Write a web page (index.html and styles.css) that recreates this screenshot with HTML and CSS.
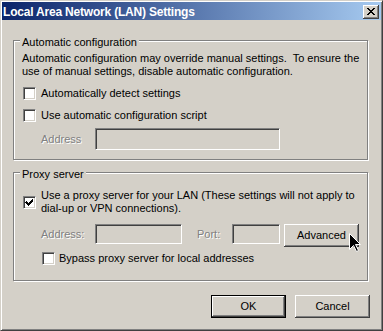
FILE: index.html
```html
<!DOCTYPE html>
<html>
<head>
<meta charset="utf-8">
<link rel="stylesheet" href="styles.css">
</head>
<body>
<div class="window">
  <div class="titlebar">
    <span class="title">Local Area Network (LAN) Settings</span>
    <span class="close">
      <svg width="16" height="14" viewBox="0 0 16 14" shape-rendering="crispEdges"><path fill="#000" d="M4 3h2v1h-2z M10 3h2v1h-2z M5 4h2v1h-2z M9 4h2v1h-2z M6 5h4v1h-4z M7 6h2v1h-2z M6 7h4v1h-4z M5 8h2v1h-2z M9 8h2v1h-2z M4 9h2v1h-2z M10 9h2v1h-2z"/></svg>
    </span>
  </div>
  <div class="client">
    <div class="group g1">
      <div class="legend">Automatic configuration</div>
      <p class="desc">Automatic configuration may override manual settings.&nbsp; To ensure the<br>use of manual settings, disable automatic configuration.</p>
      <div class="check"><span class="box"></span><span class="lbl">Automatically detect settings</span></div>
      <div class="check"><span class="box"></span><span class="lbl">Use automatic configuration script</span></div>
      <div class="field f1">
        <span class="dis addr">Address</span>
        <span class="edit e-auto"></span>
      </div>
    </div>
    <div class="group g2">
      <div class="legend">Proxy server</div>
      <div class="check multi"><span class="box"><svg width="13" height="13" viewBox="0 0 13 13" shape-rendering="crispEdges"><path fill="#000" d="M3 5h1v1h1v1h1v-1h1v-1h1v-1h1v-1h1v3h-1v1h-1v1h-1v1h-1v1h-1v-1h-1v-1h-1v-1h-1z"/></svg></span><span class="lbl">Use a proxy server for your LAN (These settings will not apply to<br>dial-up or VPN connections).</span></div>
      <div class="field f2">
        <span class="dis addr">Address:</span>
        <span class="edit e-addr"></span>
        <span class="dis port">Port:</span>
        <span class="edit e-port"></span>
        <button class="btn adv">Advanced</button>
      </div>
      <div class="check bypass"><span class="box"></span><span class="lbl">Bypass proxy server for local addresses</span></div>
    </div>
    <div class="actions">
      <button class="btn default">OK</button>
      <button class="btn">Cancel</button>
    </div>
  </div>
  <svg class="cursor" width="13" height="20" viewBox="0 0 13 20"><path d="M0.5 0.5V16.5L4.5 12.5L7.5 18.5L9.5 17.5L6.5 11.5H11.5Z" fill="#000" stroke="#fff" stroke-width="1"/></svg>
</div>
</body>
</html>
```
FILE: styles.css
```css
html, body {
  margin: 0;
  background: #d4d0c8;
}
body {
  font-family: "Liberation Sans", Arial, sans-serif;
  font-size: 11px;
  line-height: 13px;
  color: #000;
}
.window {
  position: relative;
  width: 383px;
  height: 331px;
  box-sizing: border-box;
  border: 1px solid;
  border-color: #d4d0c8 #404040 #404040 #d4d0c8;
  padding: 1px;
  box-shadow: inset 1px 1px 0 #fff, inset -1px -1px 0 #808080;
  background: #d4d0c8;
  overflow: hidden;
}
.titlebar {
  height: 18px;
  display: flex;
  align-items: flex-start;
  background: linear-gradient(90deg, #0a246a, #a6caf0);
  color: #fff;
}
.title {
  font-weight: bold;
  font-size: 12px;
  letter-spacing: -0.2px;
  line-height: 18px;
  padding-left: 1px;
  padding-top: 1px;
  white-space: nowrap;
}
.close {
  margin-left: auto;
  margin-right: 2px;
  margin-top: 3px;
  width: 16px;
  height: 14px;
  box-sizing: border-box;
  background: #d4d0c8;
  box-shadow: inset -1px -1px 0 #404040, inset 1px 1px 0 #fff, inset -2px -2px 0 #808080;
}
.close svg { display: block; }
.group {
  box-sizing: border-box;
  width: 355px;
  margin-left: 11px;
  border: 1px solid #808080;
  box-shadow: 1px 1px 0 #fff, inset 1px 1px 0 #fff;
  padding-left: 8px;
}
.g1 { margin-top: 20px; height: 120px; }
.g2 { margin-top: 12px; height: 109px; }
.legend {
  display: table;
  margin: -5px 0 0 -2px;
  padding: 0 2px;
  background: #d4d0c8;
}
.desc { margin: 3px 0 0; white-space: nowrap; }
.check {
  display: flex;
  align-items: center;
  margin-top: 9px;
  white-space: nowrap;
}
.g1 .desc + .check { margin-top: 9px; }
.check.multi { margin-top: 8px; }
.check.bypass { margin-top: 5px; }
.box {
  flex: none;
  width: 13px;
  height: 13px;
  box-sizing: border-box;
  margin-left: 1px;
  margin-right: 5px;
  border: 1px solid;
  border-color: #808080 #fff #fff #808080;
  box-shadow: inset 1px 1px 0 #404040, inset -1px -1px 0 #d4d0c8;
  background: #fff;
  position: relative;
}
.box svg { position: absolute; left: -1px; top: -1px; }
.bypass .box { margin-left: 20px; margin-right: 4px; }
.field {
  display: flex;
  align-items: center;
}
.f1 { margin-top: 6px; }
.f2 { margin-top: 9px; align-items: flex-start; }
.dis {
  color: #808080;
  text-shadow: 1px 1px 0 #fff;
}
.addr { margin-left: 19px; width: 54px; flex: none; }
.f2 .dis { line-height: 20px; }
.port { margin-left: 15px; width: 35px; flex: none; }
.edit {
  flex: none;
  box-sizing: border-box;
  border: 1px solid;
  border-color: #808080 #fff #fff #808080;
  box-shadow: inset 1px 1px 0 #404040, inset -1px -1px 0 #d4d0c8;
  background: #d4d0c8;
}
.e-auto { width: 185px; height: 22px; }
.e-addr { width: 87px; height: 20px; }
.e-port { width: 48px; height: 20px; }
.btn {
  width: 75px;
  height: 23px;
  box-sizing: border-box;
  padding: 0;
  border: none;
  background: #d4d0c8;
  font: inherit;
  color: #000;
  box-shadow: inset -1px -1px 0 #404040, inset 1px 1px 0 #fff, inset -2px -2px 0 #808080;
}
.btn.default {
  border: 1px solid #000;
}
.adv { margin-left: 4px; flex: none; }
.actions {
  display: flex;
  justify-content: flex-end;
  gap: 9px;
  margin: 14px 11px 0 0;
}
.cursor {
  position: absolute;
  left: 348px;
  top: 232px;
}
```
